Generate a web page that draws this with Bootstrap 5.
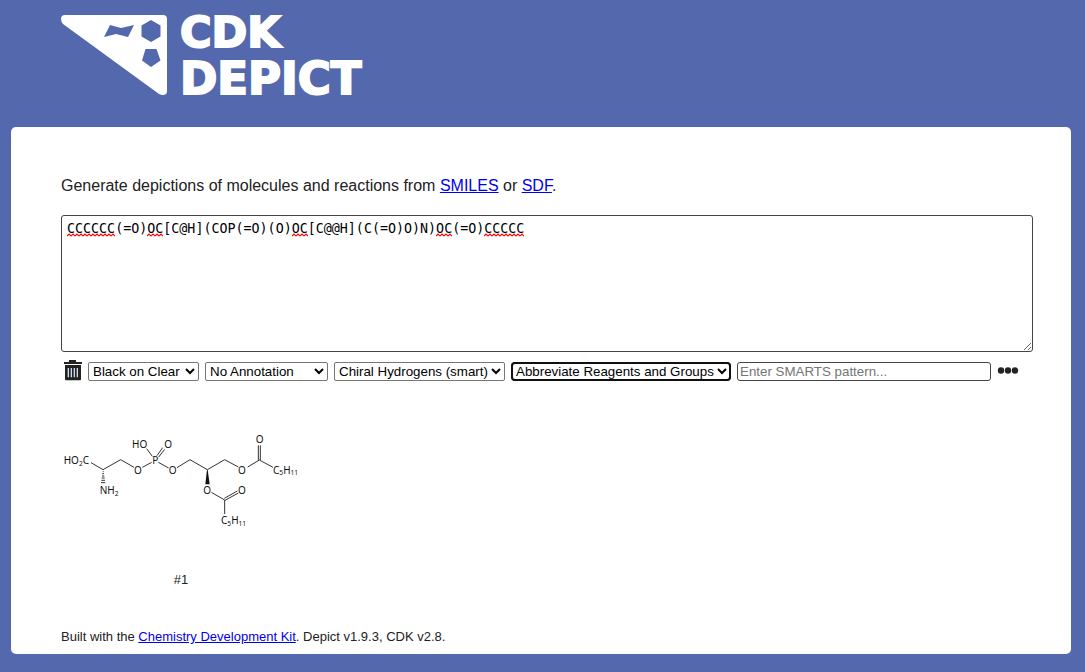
<!DOCTYPE html>
<html lang="en">
<head>
<meta charset="utf-8">
<meta name="viewport" content="width=device-width, initial-scale=1">
<title>CDK Depict</title>
<link href="https://cdn.jsdelivr.net/npm/bootstrap@5.3.0/dist/css/bootstrap.min.css" rel="stylesheet">
<style>
  body { background: #5468ad; color: #222; font-family: "Liberation Sans", Arial, sans-serif; font-size: 16px; line-height: 18px; }
  a { color: #00e; }
  .site-header { padding: 0 61px 17px; }
  .site-header svg { display: block; }
  .wordmark { font-family: "DejaVu Sans", sans-serif; font-weight: 700; font-size: 43px; font-kerning: none; fill: #fff; stroke: #fff; stroke-width: 2px; }
  .wordmark.lower { font-size: 45px; }
  .panel { background: #fff; border-radius: 5px; margin: 0 14px 18px 11px; padding: 50px 38px 8px 50px; }
  .intro { margin-bottom: 20px; }
  .smiles-input { display: block; height: 137px; padding: 5px; border: 1px solid #444; border-radius: 3px; color: #000; background: #fff; font: 10pt/16px "DejaVu Sans Mono", monospace; resize: both; outline: 0; }
  .spelling { left: 6px; top: 18px; font: 10pt/16px "DejaVu Sans Mono", monospace; pointer-events: none; }
  .spelling span { height: 4px; }
  .spelling .wavy { background: url("data:image/svg+xml,%3Csvg xmlns='http://www.w3.org/2000/svg' width='4' height='4'%3E%3Cpath d='M0 3L2 1L4 3' fill='none' stroke='%23f00' stroke-width='1.2'/%3E%3C/svg%3E") repeat-x; }
  .options { margin: 8px 12px 0 3px; gap: 6px; height: 22px; }
  .options select, .options input { height: 19px; font-size: 10pt; line-height: 15px; color: #000; border: 1px solid #767676; border-radius: 2px; background: #fff; padding: 0; min-width: 0; outline: 0; }
  .options input { padding: 0 2px; border-color: #444; border-radius: 3px; }
  .options input::placeholder { color: #757575; }
  .options select.current { border-color: #101010; border-radius: 4px; outline: 2px solid #101010; outline-offset: -2px; }
  .w-style { width: 111px; } .w-annot { width: 123px; } .w-hyd { width: 171px; } .w-abbr { width: 220px; }
  .icon-btn { border: 0; background: none; padding: 0; color: #222; line-height: 1; }
  .icon-btn svg { display: block; }
  .depiction { width: 240px; margin-top: 48px; font-size: 13px; }
  .depiction svg { display: block; font-family: "Noto Sans", sans-serif; font-size: 30px; fill: #111; }
  .depiction .bonds { stroke: #333; stroke-width: 3; fill: none; }
  .depiction .sub-no { font-size: 20px; }
  .depiction figcaption { margin-top: 41px; }
  .credits { margin-top: 39px; font-size: 13px; }
</style>
</head>
<body>
<header class="site-header">
  <svg width="320" height="110" viewBox="0 -15 320 110" role="img" aria-label="CDK Depict">
    <path fill="#fff" fill-rule="evenodd" d="M4 0H102Q106 0 106 4V76Q106 80 102 80Q100 80 98 79L2 9Q0 7 0 4Q0 0 4 0Z
      M90 5L99.500 10.500V21.500L90 27L80.500 21.500V10.500Z M84.500 34H95.500L99.500 45.500L90 52L81 45.500Z
      M49 10L60 13L73 10L67 22L55 19L43 22Z"/>
    <text class="wordmark" x="119" y="32">CDK</text>
    <text class="wordmark lower" x="119" y="79">DEPICT</text>
  </svg>
</header>
<main class="panel">
  <p class="intro">Generate depictions of molecules and reactions from <a href="#smiles">SMILES</a> or <a href="#sdf">SDF</a>.</p>
  <div class="position-relative">
    <textarea id="smiles" class="smiles-input w-100" spellcheck="false" aria-label="Structures">CCCCCC(=O)OC[C@H](COP(=O)(O)OC[C@@H](C(=O)O)N)OC(=O)CCCCC</textarea>
    <div class="spelling position-absolute d-flex" aria-hidden="true">
      <span class="wavy" style="width:6ch"></span><span style="width:4ch"></span>
      <span class="wavy" style="width:2ch"></span><span style="width:16ch"></span>
      <span class="wavy" style="width:2ch"></span><span style="width:16ch"></span>
      <span class="wavy" style="width:2ch"></span><span style="width:4ch"></span>
      <span class="wavy" style="width:5ch"></span>
    </div>
  </div>
  <form class="options d-flex align-items-center">
    <button class="icon-btn" type="button" aria-label="Clear">
      <svg width="18" height="22" viewBox="0 0 54 66"><path fill="#222" d="M15 0H36V6H54V12H0V6H15Z"/><path fill="#222" d="M3 15H51V58Q51 61 48 61H6Q3 61 3 58Z"/><path stroke="#cde" stroke-width="4" d="M13 24V52M22 24V52M31 24V52M40 24V52"/></svg>
    </button>
    <select class="w-style" aria-label="Style"><option>Black on Clear</option></select>
    <select class="w-annot" aria-label="Annotation"><option>No Annotation</option></select>
    <select class="w-hyd" aria-label="Hydrogens"><option>Chiral Hydrogens (smart)</option></select>
    <select class="w-abbr current" aria-label="Abbreviations"><option>Abbreviate Reagents and Groups</option></select>
    <input class="flex-grow-1" type="text" placeholder="Enter SMARTS pattern..." aria-label="SMARTS pattern">
    <button class="icon-btn" type="button" aria-label="More options">
      <svg width="24" height="8" viewBox="0 0 24 8"><g fill="#222"><circle cx="4" cy="3.500" r="3.200"/><circle cx="11" cy="3.500" r="3.200"/><circle cx="18" cy="3.500" r="3.200"/></g></svg>
    </button>
  </form>
  <figure class="depiction mb-0 text-center">
    <svg width="240" height="100" viewBox="0 0 720 300" role="img" aria-label="Structure 1">
      <g class="bonds">
        <path d="M90 98L126 119L179 89L219 112M244 112L272 97M257 56L274 79M293 81L311 58M288 77L305 53M292 97L323 114M348 113L387 89L439 119L491 89L532 111M560 111L595 90L636 112M592 92V46M598 90V46M451 187L491 210V252M490 205L529 183M492 211L532 189"/>
        <path d="M125 125H128M124 131H129M123 138H130M122 144H131M121 151H132M120 158H133"/>
      </g>
      <path d="M438 119H440L446 163H433Z"/>
      <text x="8" y="103">HO<tspan class="sub-no" dy="5">2</tspan><tspan dy="-5">C</tspan></text>
      <text x="219" y="131">O</text><text x="274" y="102">P</text>
      <text x="213" y="54">HO</text><text x="310" y="54">O</text><text x="323" y="131">O</text>
      <text x="116" y="192">NH<tspan class="sub-no" dy="5">2</tspan></text>
      <text x="531" y="131">O</text><text x="584" y="40">O</text>
      <text x="427" y="192">O</text><text x="531" y="192">O</text>
      <text x="636" y="131">C<tspan class="sub-no" dy="5">5</tspan><tspan dy="-5">H</tspan><tspan class="sub-no" dy="5">11</tspan></text>
      <text x="480" y="283">C<tspan class="sub-no" dy="5">5</tspan><tspan dy="-5">H</tspan><tspan class="sub-no" dy="5">11</tspan></text>
    </svg>
    <figcaption>#1</figcaption>
  </figure>
  <footer class="credits">Built with the <a href="#cdk">Chemistry Development Kit</a>. Depict v1.9.3, CDK v2.8.</footer>
</main>
<script src="https://cdn.jsdelivr.net/npm/bootstrap@5.3.0/dist/js/bootstrap.bundle.min.js"></script>
</body>
</html>
